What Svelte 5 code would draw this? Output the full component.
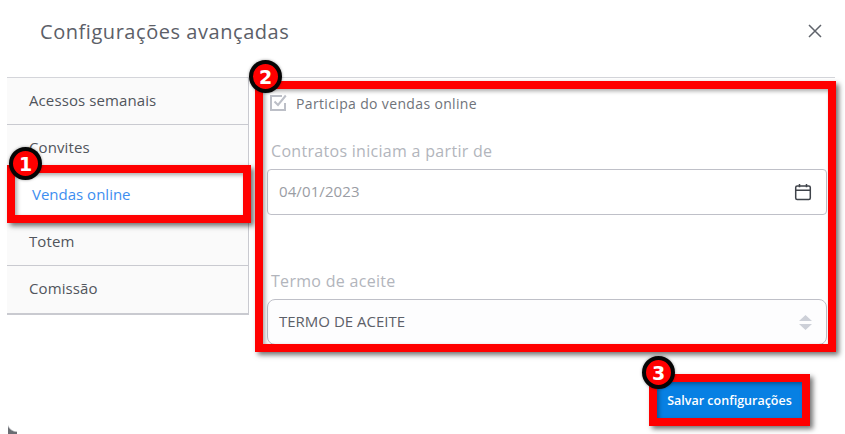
<script lang="ts">
  const tabs = ["Acessos semanais", "Convites", "Vendas online", "Totem", "Comissão"];
  const active = "Vendas online";

  const callouts = [
    { n: 1, left: 7, top: 165, width: 244, height: 58, bx: 9, by: 147 },
    { n: 2, left: 255, top: 81, width: 581, height: 271, bx: 249, by: 60 },
    { n: 3, left: 649, top: 374, width: 161, height: 52, bx: 642, by: 356 }
  ];
</script>

<div class="Modal">
  <header class="Modal__header">
    <h2 class="Modal__title">Configurações avançadas</h2>
    <button type="button" class="Modal__close" aria-label="Fechar">
      <svg width="14" height="14" viewBox="0 0 14 14" fill="none" stroke="#5f636b" stroke-width="1.5">
        <path d="M1 1 13 13M13 1 1 13" />
      </svg>
    </button>
  </header>

  <div class="Modal__body">
    <nav class="Tabs">
      {#each tabs as tab}
        <div class="Tabs__item" class:Tabs__item--active={tab === active}>{tab}</div>
      {/each}
    </nav>

    <section class="Form">
      <label class="Form__check">
        <svg width="17" height="17" viewBox="0 0 17 17" fill="none" stroke="#bcbfc7" stroke-width="2">
          <path d="M15 9V16H1V2H12" />
          <path d="M4.5 7.5 8 11 15.8 1.5" />
        </svg>
        <span class="Form__check-text">Participa do vendas online</span>
      </label>

      <div class="Form__label Form__label--first">Contratos iniciam a partir de</div>
      <div class="Form__field">
        <span class="Form__date">04/01/2023</span>
        <svg width="18" height="18" viewBox="0 0 18 18" fill="none" stroke="#3f434a" stroke-width="1.5">
          <rect x="1.7" y="3" width="14.6" height="13.4" rx="1.5" />
          <path d="M1.7 7.2H16.3M5.5 1V4.2M12.5 1V4.2" />
        </svg>
      </div>

      <div class="Form__label Form__label--second">Termo de aceite</div>
      <div class="Form__field Form__field--select">
        <span class="Form__value">TERMO DE ACEITE</span>
        <svg width="13" height="15" viewBox="0 0 13 15" fill="#cdd0d8">
          <path d="M6.5 0 13 6H0ZM6.5 15 0 9H13Z" />
        </svg>
      </div>

      <div class="Form__actions">
        <button type="button" class="Form__save">Salvar configurações</button>
      </div>
    </section>
  </div>

  <div class="Modal__corner"></div>

  {#each callouts as c}
    <div
      class="Callout__box"
      style="left:{c.left}px;top:{c.top}px;width:{c.width}px;height:{c.height}px"
    ></div>
  {/each}
  {#each callouts as c}
    <div class="Callout__badge" style="left:{c.bx}px;top:{c.by}px">{c.n}</div>
  {/each}
</div>

<style>
  :global(body) {
    margin: 0;
    background: #fff;
  }

  .Modal {
    position: relative;
    width: 845px;
    height: 434px;
    overflow: hidden;
    background: #fff;
    font-family: "Open Sans", "Noto Sans", sans-serif;
    color: #51555c;
  }

  .Modal__header {
    display: flex;
    align-items: center;
    justify-content: space-between;
    height: 77px;
    padding: 0 23px 15px 40px;
    box-sizing: border-box;
  }

  .Modal__title {
    margin: 0;
    font-size: 20px;
    font-weight: 400;
    color: #5c6068;
    letter-spacing: 0.55px;
  }

  .Modal__close {
    display: flex;
    padding: 0;
    border: 0;
    background: none;
  }

  .Modal__body {
    display: flex;
    margin: 0 10px 0 7px;
    border-top: 1px solid #d4d5da;
  }

  .Tabs {
    flex: none;
    width: 241px;
    align-self: flex-start;
    border-right: 1px solid #c9cad0;
    border-bottom: 2px solid #c9cad0;
    background: #fafafa;
  }

  .Tabs__item {
    height: 46px;
    line-height: 44px;
    padding-left: 22px;
    font-size: 15px;
    letter-spacing: 0.1px;
    border-bottom: 1px solid #c9cad0;
    color: #51555c;
  }

  .Tabs__item:last-child {
    border-bottom: 0;
    height: 47px;
  }

  .Tabs__item--active {
    padding-left: 25px;
    letter-spacing: 0;
    background: #fff;
    color: #3d8ef0;
  }

  .Form {
    flex: 1;
    padding: 0 8px 0 18px;
  }

  .Form__check {
    display: flex;
    align-items: center;
    gap: 9px;
    height: 52px;
    padding: 0 0 4px 3px;
    box-sizing: border-box;
    font-size: 14px;
    letter-spacing: 0.35px;
    color: #6f737a;
  }

  .Form__check-text {
    margin-top: 2px;
  }

  .Form__label {
    padding-left: 4px;
    font-size: 16px;
    letter-spacing: 0.3px;
    color: #b2b5bc;
  }

  .Form__label--first {
    margin-top: 10px;
    height: 29px;
  }

  .Form__label--second {
    margin-top: 55px;
    height: 29px;
  }

  .Form__field {
    display: flex;
    align-items: center;
    justify-content: space-between;
    height: 46px;
    padding: 0 14px 0 11px;
    box-sizing: border-box;
    border: 1px solid #bfc0c8;
    border-radius: 4px;
    font-size: 15px;
  }

  .Form__date {
    margin-top: -2px;
    color: #9a9da4;
    letter-spacing: 0.1px;
  }

  .Form__value {
    margin-top: -2px;
    color: #5c6068;
  }

  .Form__field--select {
    border-radius: 8px;
    background: #fdfdfe;
  }

  .Form__actions {
    display: flex;
    justify-content: flex-end;
    margin: 37px 25px 0 0;
  }

  .Form__save {
    width: 145px;
    height: 36px;
    padding: 0;
    border: 0;
    background: #0780e3;
    color: #fff;
    font-family: inherit;
    font-size: 12.5px;
    font-weight: 600;
  }

  .Modal__corner {
    position: absolute;
    left: 8px;
    bottom: 0;
    width: 9px;
    height: 12px;
    background: radial-gradient(circle at 100% 0, transparent 9px, #6a6d73 10.5px);
  }

  .Callout__box {
    position: absolute;
    box-sizing: border-box;
    border: 8px solid #ff0000;
    box-shadow:
      3px 3px 5px rgba(0, 0, 0, 0.55),
      inset 2px 2px 4px rgba(0, 0, 0, 0.35);
  }

  .Callout__badge {
    position: absolute;
    display: flex;
    align-items: center;
    justify-content: center;
    width: 33px;
    height: 33px;
    box-sizing: border-box;
    border: 4px solid #050505;
    border-radius: 50%;
    background: #ff0000;
    color: #fff;
    font-family: "DejaVu Sans", sans-serif;
    font-size: 19px;
    font-weight: 700;
    box-shadow: 0 0 3px rgba(0, 0, 0, 0.4);
  }
</style>
